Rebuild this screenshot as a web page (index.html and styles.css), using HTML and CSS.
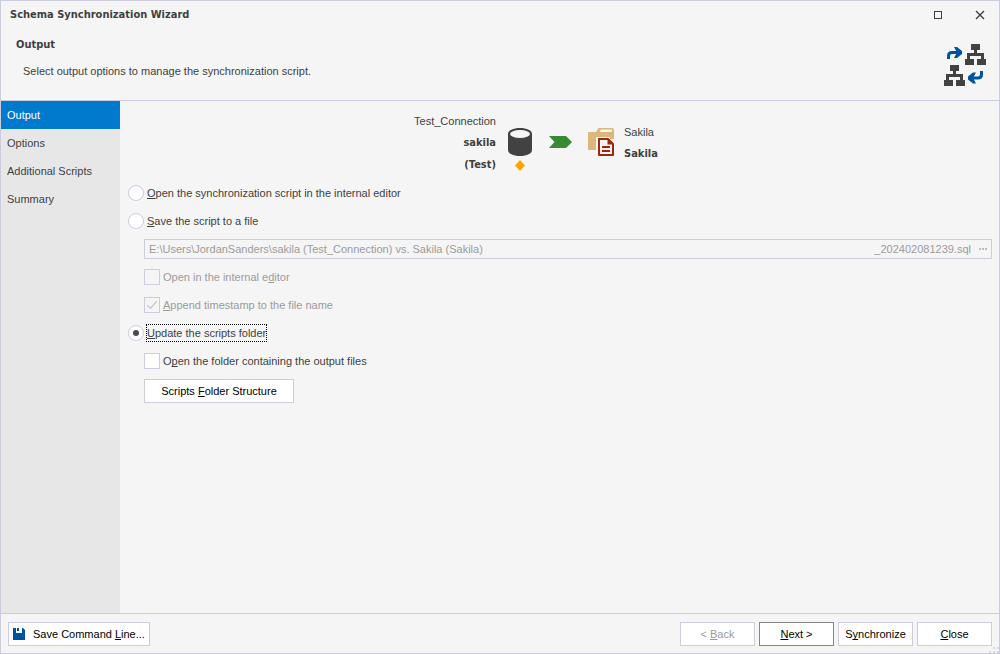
FILE: index.html
```html
<!DOCTYPE html>
<html lang="en">
<head>
    <meta charset="UTF-8">
    <meta name="viewport" content="width=device-width, initial-scale=1.0">
    <title>Schema Synchronization Wizard</title>
    <link rel="stylesheet" href="styles.css">
</head>
<body>
    <div class="window">
        <!-- Title bar -->
        <div class="title-bar">
            <h1>Schema Synchronization Wizard</h1>
            <div class="window-buttons">
                <button type="button" aria-label="Maximize">
                    <svg width="10" height="10" viewBox="0 0 10 10"><rect x="1.5" y="1.5" width="7" height="7" fill="none" stroke="#3f3f3f"/></svg>
                </button>
                <button type="button" aria-label="Close window">
                    <svg width="10" height="10" viewBox="0 0 10 10"><path d="M1 1L9 9M9 1L1 9" fill="none" stroke="#3f3f3f" stroke-width="1.4"/></svg>
                </button>
            </div>
        </div>

        <!-- Page header -->
        <header class="page-header">
            <div>
                <h2>Output</h2>
                <p>Select output options to manage the synchronization script.</p>
            </div>
            <svg class="header-icon" width="42" height="42" viewBox="0 0 42 42">
                <defs>
                    <g id="chart" fill="#424242">
                        <path d="M6 0h9v6h-3v3h7v6h2v6h-9v-6h4v-3H5v3h4v6H0v-6h2V9h7V6H6z"/>
                    </g>
                </defs>
                <use href="#chart" x="21" y="0"/>
                <use href="#chart" x="0" y="21"/>
                <path d="M4.500 15V12Q4.500 8.500 8 8.500H15" fill="none" stroke="#0053a0" stroke-width="3"/>
                <path d="M10 3h3l5 4v3l-5 4h-3l3-5.500z" fill="#0053a0"/>
                <path d="M37.500 27V30.500Q37.500 34 34 34H27" fill="none" stroke="#0053a0" stroke-width="3"/>
                <path d="M32 28.500h-3l-5 4v3l5 4h3l-3-5.500z" fill="#0053a0"/>
            </svg>
        </header>

        <div class="body">
            <!-- Wizard steps -->
            <nav class="steps">
                <a class="active" href="#output">Output</a>
                <a href="#options">Options</a>
                <a href="#scripts">Additional Scripts</a>
                <a href="#summary">Summary</a>
            </nav>

            <main class="content">
                <div class="route">
                    <div class="source">
                        <div class="names">
                            <span>Test_Connection</span>
                            <strong>sakila</strong>
                            <strong>(Test)</strong>
                        </div>
                        <div class="database">
                            <svg width="24" height="30" viewBox="0 0 24 30">
                                <path d="M0 6C0 2.500 5 0 12 0s12 2.500 12 6v16c0 3.500-5 6-12 6S0 25.500 0 22z" fill="#424242"/>
                                <ellipse cx="12" cy="6" rx="10" ry="4" fill="#f5f5f5"/>
                            </svg>
                            <svg class="marker" width="10" height="12" viewBox="0 0 10 12"><path d="M5 0L10 5.500L5 11L0 5.500z" fill="#ffa500"/></svg>
                        </div>
                    </div>
                    <svg width="24" height="14" viewBox="0 0 24 14"><path d="M1 0h17l6 6l-6 6H1l5.500-6z" fill="#388a34"/></svg>
                    <div class="target">
                        <svg width="28" height="30" viewBox="0 0 28 30">
                            <path d="M0 5Q0 4 1 4H8L10.500 0H24Q26 0 26 2V11H20L18 9H10V22H1Q0 22 0 21z" fill="#dcb67a"/>
                            <path d="M11.500 4L13 1.500H24V4z" fill="#f5f5f5"/>
                            <path d="M8 9H22V12H10V22H8z" fill="#f5f5f5"/>
                            <path d="M11 11h9l5 5v11H11z" fill="#f5f5f5" stroke="#a1260d" stroke-width="2" stroke-linejoin="round"/>
                            <path d="M19.500 11v5.500H25z" fill="#a1260d"/>
                            <path d="M14 19h8M14 23h8" fill="none" stroke="#a1260d" stroke-width="2"/>
                        </svg>
                        <div class="names">
                            <span>Sakila</span>
                            <strong>Sakila</strong>
                        </div>
                    </div>
                </div>

                <form class="options">
                    <div class="option">
                        <input type="radio" name="output" id="openEditor">
                        <label for="openEditor"><u>O</u>pen the synchronization script in the internal editor</label>
                    </div>
                    <div class="option">
                        <input type="radio" name="output" id="saveFile">
                        <label for="saveFile"><u>S</u>ave the script to a file</label>
                    </div>
                    <div class="option nested">
                        <div class="path-box">
                            <input type="text" aria-label="Script file" value="E:\Users\JordanSanders\sakila (Test_Connection) vs. Sakila (Sakila)" disabled>
                            <span>_202402081239.sql</span>
                            <button type="button" aria-label="Browse" disabled>
                                <svg width="8" height="2" viewBox="0 0 8 2"><path d="M0 0h2v2H0zM3 0h2v2H3zM6 0h2v2H6z" fill="#bdbdbd"/></svg>
                            </button>
                        </div>
                    </div>
                    <div class="option nested">
                        <input type="checkbox" id="openInternal" disabled>
                        <label for="openInternal">Open in the internal e<u>d</u>itor</label>
                    </div>
                    <div class="option nested">
                        <input type="checkbox" id="timestamp" checked disabled>
                        <label for="timestamp"><u>A</u>ppend timestamp to the file name</label>
                    </div>
                    <div class="option">
                        <input type="radio" name="output" id="updateFolder" checked>
                        <label class="focused" for="updateFolder"><u>U</u>pdate the scripts folder</label>
                    </div>
                    <div class="option nested">
                        <input type="checkbox" id="openFolder">
                        <label for="openFolder">O<u>p</u>en the folder containing the output files</label>
                    </div>
                    <button type="button" class="btn structure">Scripts <u>F</u>older Structure</button>
                </form>
            </main>
        </div>

        <footer>
            <button type="button" class="btn save">
                <svg width="12" height="12" viewBox="0 0 12 12"><path d="M0 0h3v5h6V0h1l2 2v10H0z" fill="#0053a0"/><path d="M4 0h2v3H4z" fill="#0053a0"/></svg>
                <span>Save Command <u>L</u>ine...</span>
            </button>
            <div class="actions">
                <button type="button" class="btn" disabled>&lt; <u>B</u>ack</button>
                <button type="button" class="btn default"><u>N</u>ext &gt;</button>
                <button type="button" class="btn">S<u>y</u>nchronize</button>
                <button type="button" class="btn"><u>C</u>lose</button>
            </div>
            <svg class="grip" width="10" height="6" viewBox="0 0 10 6"><path d="M4 0h2v2H4zM8 0h2v2H8zM0 4h2v2H0zM4 4h2v2H4zM8 4h2v2H8z" fill="#d9d9e3"/></svg>
        </footer>
    </div>
</body>
</html>
```
FILE: styles.css
```css
* {
    box-sizing: border-box;
}

body {
    margin: 0;
    font-family: Tahoma, "Liberation Sans", Arial, sans-serif;
    font-size: 11px;
    line-height: 22px;
    color: #3f3f3f;
    background: #f5f5f5;
}

h1, h2, p {
    margin: 0;
    font-size: 11px;
}

h1, h2, strong {
    font-family: Tahoma, "DejaVu Sans Condensed", "DejaVu Sans", sans-serif;
    font-stretch: condensed;
}

button, input {
    font: inherit;
    color: inherit;
}

svg {
    display: block;
}

u {
    text-decoration-skip-ink: none;
    text-underline-offset: 1px;
}

.window {
    display: flex;
    flex-direction: column;
    min-height: 100vh;
    border: 1px solid #ccccde;
}

.title-bar {
    display: flex;
    justify-content: space-between;
    align-items: center;
    height: 28px;
    padding: 0 14px 0 9px;
}

.window-buttons {
    display: flex;
    gap: 32px;
}

.window-buttons button {
    padding: 0;
    border: none;
    background: none;
}

.page-header {
    display: flex;
    justify-content: space-between;
    align-items: flex-start;
    padding: 5px 13px 14px 15px;
    border-bottom: 1px solid #ccccde;
}

.page-header p {
    padding: 4px 7px;
}

.header-icon {
    margin-top: 10px;
}

.body {
    display: flex;
    flex: 1;
}

.steps {
    width: 119px;
    background: #e7e7e7;
}

.steps a {
    display: block;
    padding: 0 6px;
    line-height: 28px;
    color: #3f3f3f;
    text-decoration: none;
}

.steps a.active {
    background: #007acc;
    color: white;
}

.content {
    flex: 1;
    padding: 9px 7px 0 8px;
}

/* Source -> target */
.route {
    display: grid;
    grid-template-columns: 1fr auto 1fr;
    align-items: center;
    gap: 16px;
}

.source, .target {
    display: flex;
    align-items: center;
    gap: 12px;
}

.source {
    justify-content: flex-end;
    text-align: right;
}

.target {
    gap: 8px;
}

.names {
    display: flex;
    flex-direction: column;
}

.database {
    position: relative;
}

.marker {
    position: absolute;
    top: 32px;
    left: 7px;
}

/* Output options */
.options {
    padding-top: 3px;
}

.option {
    display: flex;
    align-items: center;
    gap: 2px;
    height: 28px;
}

.nested {
    padding-left: 16px;
}

.option label {
    padding: 0 1px;
    line-height: 18px;
}

.option label.focused {
    outline: 1px dotted black;
    outline-offset: -1px;
}

.option input:disabled + label {
    color: #9b9b9b;
}

input[type="radio"], input[type="checkbox"] {
    appearance: none;
    display: grid;
    place-items: center;
    width: 16px;
    height: 16px;
    margin: 0;
    border: 1px solid #ccccde;
    background: white;
}

input[type="radio"] {
    border-radius: 50%;
}

input[type="radio"]:checked::before {
    content: "";
    width: 6px;
    height: 6px;
    border-radius: 50%;
    background: #4a4a4a;
}

input[type="checkbox"]:disabled {
    background: #f5f5f5;
}

input[type="checkbox"]:checked::before {
    content: "";
    width: 9px;
    height: 4px;
    margin-bottom: 3px;
    border: solid #bdbdbd;
    border-width: 0 0 1px 1px;
    transform: rotate(-48deg);
}

.path-box {
    display: flex;
    align-items: center;
    flex: 1;
    height: 20px;
    padding: 0 4px;
    border: 1px solid #ccccde;
    color: #9b9b9b;
}

.path-box input {
    flex: 1;
    min-width: 0;
    height: 18px;
    padding: 0;
    border: none;
    background: none;
}

.path-box button {
    margin-left: 8px;
    padding: 0;
    border: none;
    background: none;
}

.btn {
    height: 24px;
    min-width: 75px;
    padding: 0 4px;
    border: 1px solid #ccccde;
    background: white;
    line-height: 22px;
    color: black;
}

.btn:disabled {
    color: #9b9b9b;
}

.btn.default {
    border-color: #858585;
}

.structure {
    margin: 4px 16px;
    min-width: 150px;
}

footer {
    position: relative;
    display: flex;
    justify-content: space-between;
    padding: 8px 7px 7px;
    border-top: 1px solid #ccccde;
}

.save {
    display: flex;
    align-items: center;
    gap: 8px;
}

.actions {
    display: flex;
    gap: 4px;
}

.grip {
    position: absolute;
    right: 0;
    bottom: 0;
}
```
